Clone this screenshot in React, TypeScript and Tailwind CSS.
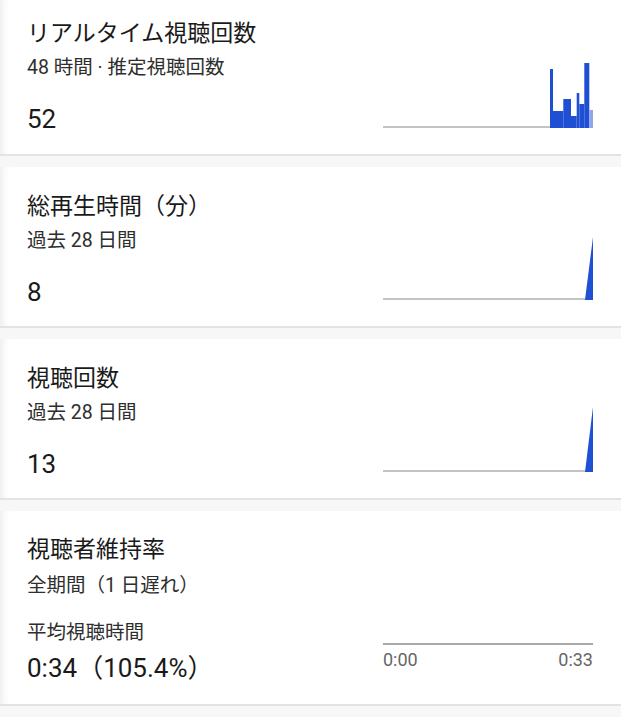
import React from 'react'

const font = { fontFamily: 'Roboto, "Noto Sans CJK JP", sans-serif' }

const BLUE = '#1f4fd3'

// step bars for the realtime chart (x from, x to, top y) in a 210x66 box
const bars: [number, number, number][] = [
  [167, 170, 7],
  [169.7, 180.3, 49],
  [180.3, 188, 37],
  [188, 193.7, 54],
  [193.7, 196.3, 31],
  [196.3, 201.3, 42],
  [201.3, 206.3, 1],
]

const RealtimeChart = () => (
  <svg width="210" height="66" viewBox="0 0 210 66" className="block">
    <line x1="0" y1="65" x2="167" y2="65" stroke="#c4c4c4" strokeWidth="2" />
    {bars.map(([a, b, top], i) => (
      <rect key={i} x={a} y={top} width={b - a} height={66 - top} fill={BLUE} />
    ))}
    <rect x="206.3" y="48" width="3.7" height="18" fill="#8ea6ec" />
  </svg>
)

const SpikeChart = ({ top }: { top: number }) => (
  <svg width="210" height="66" viewBox="0 0 210 66" className="block">
    <line x1="0" y1="65" x2="203" y2="65" stroke="#c4c4c4" strokeWidth="2" />
    <polygon points={`202,66 210,${top} 210,66`} fill={BLUE} />
  </svg>
)

interface StatCardProps {
  title: string
  subtitle: string
  value: string
  chart: React.ReactNode
  first?: boolean
}

const StatCard: React.FC<StatCardProps> = ({ title, subtitle, value, chart, first }) => (
  <div
    className={`flex justify-between bg-white border-b-2 border-[#e3e3e3] mb-[11px] shadow-[inset_9px_0_8px_-7px_rgba(0,0,0,0.09)] ${
      first ? 'h-[156px] pt-[19px]' : 'h-[161px] pt-[25px]'
    }`}
  >
    <div className="pl-[27px]">
      <div className="text-[23px] leading-[30px] text-[#1a1a1a]">{title}</div>
      <div className="mt-[6px] text-[19.5px] leading-[26px] text-[#2e2e2e]">{subtitle}</div>
      <div className="mt-[23px] text-[26px] leading-[30px] text-[#1a1a1a]">{value}</div>
    </div>
    <div className="self-end mb-[26px] mr-[28px]">{chart}</div>
  </div>
)

export default function App() {
  return (
    <div style={font} className="w-[621px] h-[717px] overflow-hidden bg-[#f7f7f7]">
      <StatCard
        first
        title="リアルタイム視聴回数"
        subtitle="48 時間 · 推定視聴回数"
        value="52"
        chart={<RealtimeChart />}
      />
      <StatCard title="総再生時間（分）" subtitle="過去 28 日間" value="8" chart={<SpikeChart top={3} />} />
      <StatCard title="視聴回数" subtitle="過去 28 日間" value="13" chart={<SpikeChart top={1} />} />

      {/* retention card */}
      <div className="flex justify-between bg-white border-b-2 border-[#e3e3e3] h-[195px] pt-[24px] shadow-[inset_9px_0_8px_-7px_rgba(0,0,0,0.09)]">
        <div className="pl-[27px]">
          <div className="text-[23px] leading-[30px] text-[#1a1a1a]">視聴者維持率</div>
          <div className="mt-[8px] text-[19.5px] leading-[26px] text-[#2e2e2e]">全期間（1 日遅れ）</div>
          <div className="mt-[21px] text-[19.5px] leading-[26px] text-[#2e2e2e]">平均視聴時間</div>
          <div className="mt-[7px] text-[26px] leading-[30px] text-[#1a1a1a]">0:34（105.4%）</div>
        </div>
        <div className="self-end mb-[32px] mr-[28px] w-[210px]">
          <div className="h-[2px] bg-[#a8a8a8]" />
          <div className="flex justify-between mt-[3px] text-[18px] leading-[24px] text-[#666]">
            <span>0:00</span>
            <span>0:33</span>
          </div>
        </div>
      </div>
    </div>
  )
}
